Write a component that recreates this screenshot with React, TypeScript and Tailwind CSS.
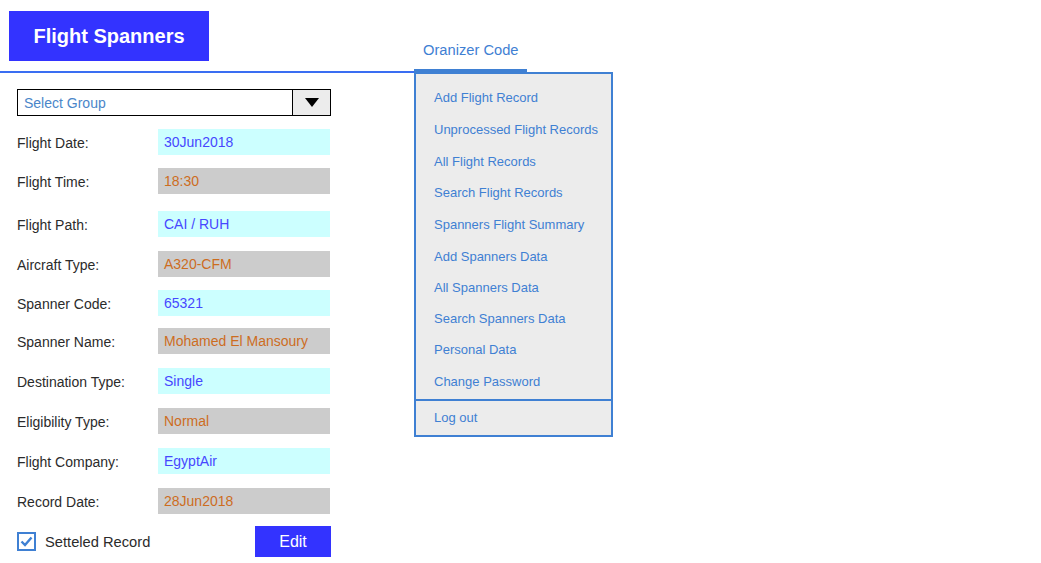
import React from "react"

type Field = {
    label: string
    value: string
    filled: boolean
    gap: string
}

const fields: Field[] = [
    { label: "Flight Date:", value: "30Jun2018", filled: true, gap: "mt-[13px]" },
    { label: "Flight Time:", value: "18:30", filled: false, gap: "mt-[13px]" },
    { label: "Flight Path:", value: "CAI / RUH", filled: true, gap: "mt-[17px]" },
    { label: "Aircraft Type:", value: "A320-CFM", filled: false, gap: "mt-[14px]" },
    { label: "Spanner Code:", value: "65321", filled: true, gap: "mt-[13px]" },
    { label: "Spanner Name:", value: "Mohamed El Mansoury", filled: false, gap: "mt-[12px]" },
    { label: "Destination Type:", value: "Single", filled: true, gap: "mt-[14px]" },
    { label: "Eligibility Type:", value: "Normal", filled: false, gap: "mt-[14px]" },
    { label: "Flight Company:", value: "EgyptAir", filled: true, gap: "mt-[14px]" },
    { label: "Record Date:", value: "28Jun2018", filled: false, gap: "mt-[14px]" },
]

const menuItems = [
    { text: "Add Flight Record", h: "h-[32px]" },
    { text: "Unprocessed Flight Records", h: "h-[32px]" },
    { text: "All Flight Records", h: "h-[31px]" },
    { text: "Search Flight Records", h: "h-[32px]" },
    { text: "Spanners Flight Summary", h: "h-[32px]" },
    { text: "Add Spanners Data", h: "h-[32px]" },
    { text: "All Spanners Data", h: "h-[30px]" },
    { text: "Search Spanners Data", h: "h-[31px]" },
    { text: "Personal Data", h: "h-[32px]" },
    { text: "Change Password", h: "h-[32px]" },
]

const FieldRow = ({ field }: { field: Field }) => (
    <div className={`flex flex-row items-center ${field.gap}`}>
        <span className="w-[141px] pt-[2px] text-[14px] text-[#2b2b2b]">
            {field.label}
        </span>
        <div
            className={
                field.filled
                    ? "flex items-center w-[172px] h-[26px] pl-[6px] pt-[1px] text-[14px] bg-[#ccffff] text-[#4747ff]"
                    : "flex items-center w-[172px] h-[26px] pl-[6px] pt-[1px] text-[14px] bg-[#cccccc] text-[#cc6d1f]"
            }
        >
            {field.value}
        </div>
    </div>
)

const App = () => {
    return (
        <div className="flex flex-row w-[1041px] h-[563px] bg-white font-['Liberation_Sans',Arial,sans-serif]">
            {/* left column */}
            <div className="flex flex-col w-[414px]">
                <div className="pt-[11px] pl-[9px]">
                    <div className="flex items-center justify-center w-[200px] h-[50px] bg-[#3333ff] text-white text-[20px] font-bold">
                        Flight Spanners
                    </div>
                </div>
                <div className="mt-[10px] h-[2px] bg-[#3a6ef2]" />
                <div className="flex flex-col pl-[17px]">
                    <div className="flex flex-row mt-[16px] w-[314px] h-[27px] border border-black">
                        <span className="flex items-center flex-1 pl-[6px] pt-[1px] text-[14px] text-[#4a86c9]">
                            Select Group
                        </span>
                        <div className="flex items-center justify-center w-[38px] bg-[#ececec] border-l border-black">
                            <svg width="14" height="9" viewBox="0 0 14 9">
                                <polygon points="0,0 14,0 7,9" fill="#000" />
                            </svg>
                        </div>
                    </div>
                    {fields.map((f) => (
                        <FieldRow key={f.label} field={f} />
                    ))}
                    <div className="flex flex-row items-center justify-between w-[314px] mt-[12px]">
                        <div className="flex flex-row items-center space-x-[9px]">
                            <div className="flex items-center justify-center w-[19px] h-[19px] border-2 border-[#3f80d3] bg-white">
                                <svg width="13" height="11" viewBox="0 0 13 11">
                                    <polyline
                                        points="1.5,5.5 5,9 11.5,1.5"
                                        fill="none"
                                        stroke="#3f80d3"
                                        strokeWidth="2.4"
                                    />
                                </svg>
                            </div>
                            <span className="pt-[1px] text-[14.7px] text-[#2b2b2b]">
                                Setteled Record
                            </span>
                        </div>
                        <button className="flex items-center justify-center w-[76px] h-[31px] bg-[#3333ff] text-white text-[16px]">
                            Edit
                        </button>
                    </div>
                </div>
            </div>

            {/* right column: organizer menu */}
            <div className="flex flex-col">
                <div className="h-[69px] pt-[39px] pl-[9px] text-[14.7px] text-[#3f80d3]">
                    Oranizer Code
                </div>
                <div className="w-[113px] h-[4px] bg-[#3f80d3]" />
                <div className="flex flex-col w-[199px] -mt-[1px] border-2 border-[#3f80d3] bg-[#ececec]">
                    <div className="flex flex-col pt-[8px] pb-[1px]">
                        {menuItems.map((m) => (
                            <div
                                key={m.text}
                                className={`flex items-center pl-[18px] text-[13px] text-[#3f80d3] ${m.h}`}
                            >
                                {m.text}
                            </div>
                        ))}
                    </div>
                    <div className="flex items-center h-[36px] pl-[18px] text-[13px] text-[#3f80d3] border-t-2 border-[#3f80d3]">
                        Log out
                    </div>
                </div>
            </div>
        </div>
    )
}

export default App
